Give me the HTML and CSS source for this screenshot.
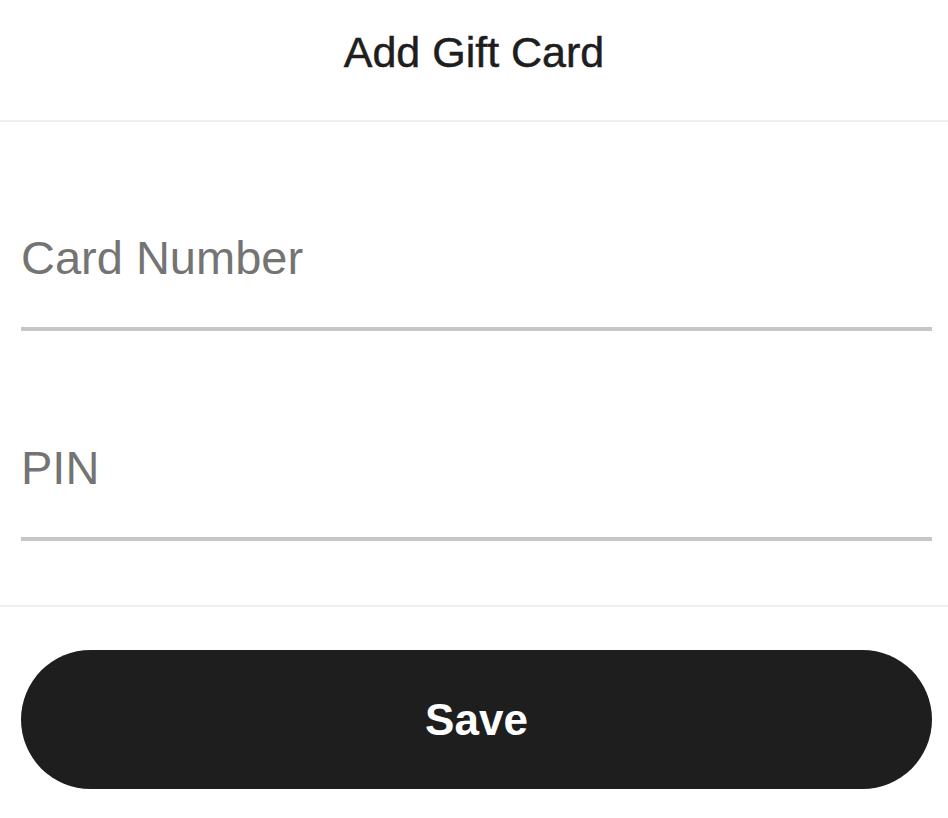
FILE: index.html
```html
<!DOCTYPE html>
<html lang="en">
<head>
<meta charset="utf-8">
<title>Add Gift Card</title>
<link rel="stylesheet" href="styles.css">
</head>
<body>
<header class="top-bar">
  <h1 class="title">Add Gift Card</h1>
</header>
<form class="gift-form">
  <div class="fields">
    <label class="field"><input class="field-input" type="text" placeholder="Card Number"></label>
    <label class="field"><input class="field-input" type="text" placeholder="PIN"></label>
  </div>
  <div class="actions">
    <button class="save-btn" type="button">Save</button>
  </div>
</form>
</body>
</html>
```
FILE: styles.css
```css
* { box-sizing: border-box; }
html, body { margin: 0; padding: 0; background: #fff; }
body {
  font-family: "Liberation Sans", Arial, sans-serif;
  color: #1e1e1e;
  width: 948px;
  height: 818px;
  overflow: hidden;
}
.top-bar {
  height: 122px;
  padding-top: 31px;
  border-bottom: 2px solid #efefef;
  display: flex;
  justify-content: center;
}
.title {
  margin: 0;
  font-size: 43px;
  line-height: 43px;
  font-weight: 400;
  color: #1e1e1e;
  -webkit-text-stroke: 0.5px #1e1e1e;
}
.gift-form { display: flex; flex-direction: column; }
.fields {
  display: flex;
  flex-direction: column;
  gap: 113px;
  padding: 112px 16px 64px 21px;
  border-bottom: 2px solid #efefef;
}
.field { display: block; }
.field-input {
  display: block;
  width: 100%;
  height: 97px;
  padding: 0 0 47px 0;
  margin: 0;
  border: 0;
  border-bottom: 4px solid #c6c6c6;
  font-family: "Liberation Sans", Arial, sans-serif;
  font-size: 47px;
  color: #1e1e1e;
  background: transparent;
  outline: none;
}
.field-input::placeholder { color: #747474; opacity: 1; }
.actions {
  padding: 43px 16px 29px 21px;
}
.save-btn {
  display: block;
  width: 100%;
  height: 139px;
  border: 0;
  border-radius: 70px;
  background: #1e1e1e;
  color: #fff;
  font-family: "Liberation Sans", Arial, sans-serif;
  font-size: 44px;
  font-weight: 700;
  cursor: pointer;
}
```
